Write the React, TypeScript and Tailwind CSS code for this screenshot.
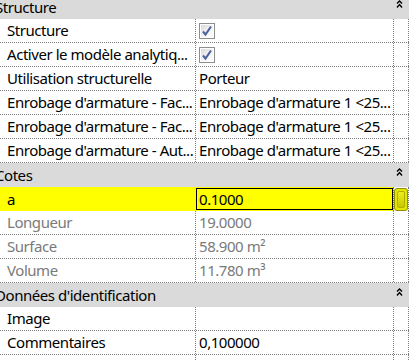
import React from "react";

type Row = {
  label: string;
  value?: string;
  check?: boolean;
  dim?: boolean;
  active?: boolean;
};

type Group = { title: string; rows: Row[] };

const groups: Group[] = [
  {
    title: "Structure",
    rows: [
      { label: "Structure", check: true },
      { label: "Activer le modèle analytiq...", check: true },
      { label: "Utilisation structurelle", value: "Porteur" },
      { label: "Enrobage d'armature - Fac...", value: "Enrobage d'armature 1 <25..." },
      { label: "Enrobage d'armature - Fac...", value: "Enrobage d'armature 1 <25..." },
      { label: "Enrobage d'armature - Aut...", value: "Enrobage d'armature 1 <25..." },
    ],
  },
  {
    title: "Cotes",
    rows: [
      { label: "a", value: "0.1000", active: true },
      { label: "Longueur", value: "19.0000", dim: true },
      { label: "Surface", value: "58.900 m²", dim: true },
      { label: "Volume", value: "11.780 m³", dim: true },
    ],
  },
  {
    title: "Données d'identification",
    rows: [
      { label: "Image", value: "" },
      { label: "Commentaires", value: "0,100000" },
      { label: "Identification", value: "" },
    ],
  },
];

function Collapse() {
  return (
    <svg width="7" height="8" viewBox="0 0 7 8" className="block">
      <path d="M1 3.5 L3.5 1 L6 3.5" fill="none" stroke="#000" strokeWidth="1.4" />
      <path d="M1 7.5 L3.5 4.5 L6 7.5" fill="none" stroke="#000" strokeWidth="1.4" />
    </svg>
  );
}

function CheckBox() {
  return (
    <svg width="16" height="16" viewBox="0 0 16 16" className="block">
      <defs>
        <linearGradient id="cb" x1="0" y1="0" x2="1" y2="1">
          <stop offset="0" stopColor="#d8d8d8" />
          <stop offset="0.5" stopColor="#f2f2f2" />
          <stop offset="1" stopColor="#ffffff" />
        </linearGradient>
      </defs>
      <rect x="0.5" y="0.5" width="15" height="15" fill="#fff" stroke="#8e8e8e" />
      <rect x="2" y="2" width="12" height="12" fill="url(#cb)" />
      <path d="M4 8.5 L6.5 11.5 L12 3.5" fill="none" stroke="#4b5fa0" strokeWidth="2" />
    </svg>
  );
}

function PropRow({ row }: { row: Row }) {
  const line = row.active ? "" : "border-b border-dotted border-[#7c7c7c]";
  const tone = row.dim ? "text-[#7a7a7a]" : "text-black";
  return (
    <div className={`flex h-[24px] ${line} ${row.active ? "bg-[#ffff00]" : ""}`}>
      <div
        className={`flex w-[196px] items-center overflow-hidden whitespace-nowrap pl-[7px] ${tone} ${
          row.active ? "" : "border-r border-dotted border-[#7c7c7c]"
        }`}
      >
        {row.label}
      </div>
      <div className="flex w-[198px] items-center overflow-hidden border-r border-dotted border-[#7c7c7c]">
        {row.check ? (
          <div className="pl-[3px]">
            <CheckBox />
          </div>
        ) : row.active ? (
          <div className="flex h-[22px] w-[197px] items-center border border-black pl-[2px] text-black">
            {row.value}
          </div>
        ) : (
          <span className={`whitespace-nowrap pl-[3px] ${tone}`}>{row.value}</span>
        )}
      </div>
      <div className="flex w-[15px] items-center border-r border-dotted border-[#7c7c7c] bg-white">
        {row.active && (
          <div className="flex h-[23px] w-[14px] items-stretch rounded-[3px] border border-[#8f8f00] bg-[#e6e600] p-[2px]">
            <div className="w-full rounded-[2px] border border-[#b0b000] bg-gradient-to-b from-[#eeee20] to-[#c8c800]" />
          </div>
        )}
      </div>
    </div>
  );
}

export default function App() {
  return (
    <div
      className="h-[361px] w-[409px] overflow-hidden bg-white text-[15px] leading-none tracking-[-0.45px]"
      style={{ fontFamily: '"Noto Sans", "Open Sans", sans-serif' }}
    >
      <div className="-mt-[5px]">
        {groups.map((g) => (
          <div key={g.title}>
            <div className="flex h-[24px] items-center justify-between bg-[#dadada] pr-[6px]">
              <span className="-ml-[5px] whitespace-nowrap text-black">{g.title}</span>
              <div className="self-start pt-[5px]">
                <Collapse />
              </div>
            </div>
            {g.rows.map((r, i) => (
              <PropRow key={i} row={r} />
            ))}
          </div>
        ))}
      </div>
    </div>
  );
}
